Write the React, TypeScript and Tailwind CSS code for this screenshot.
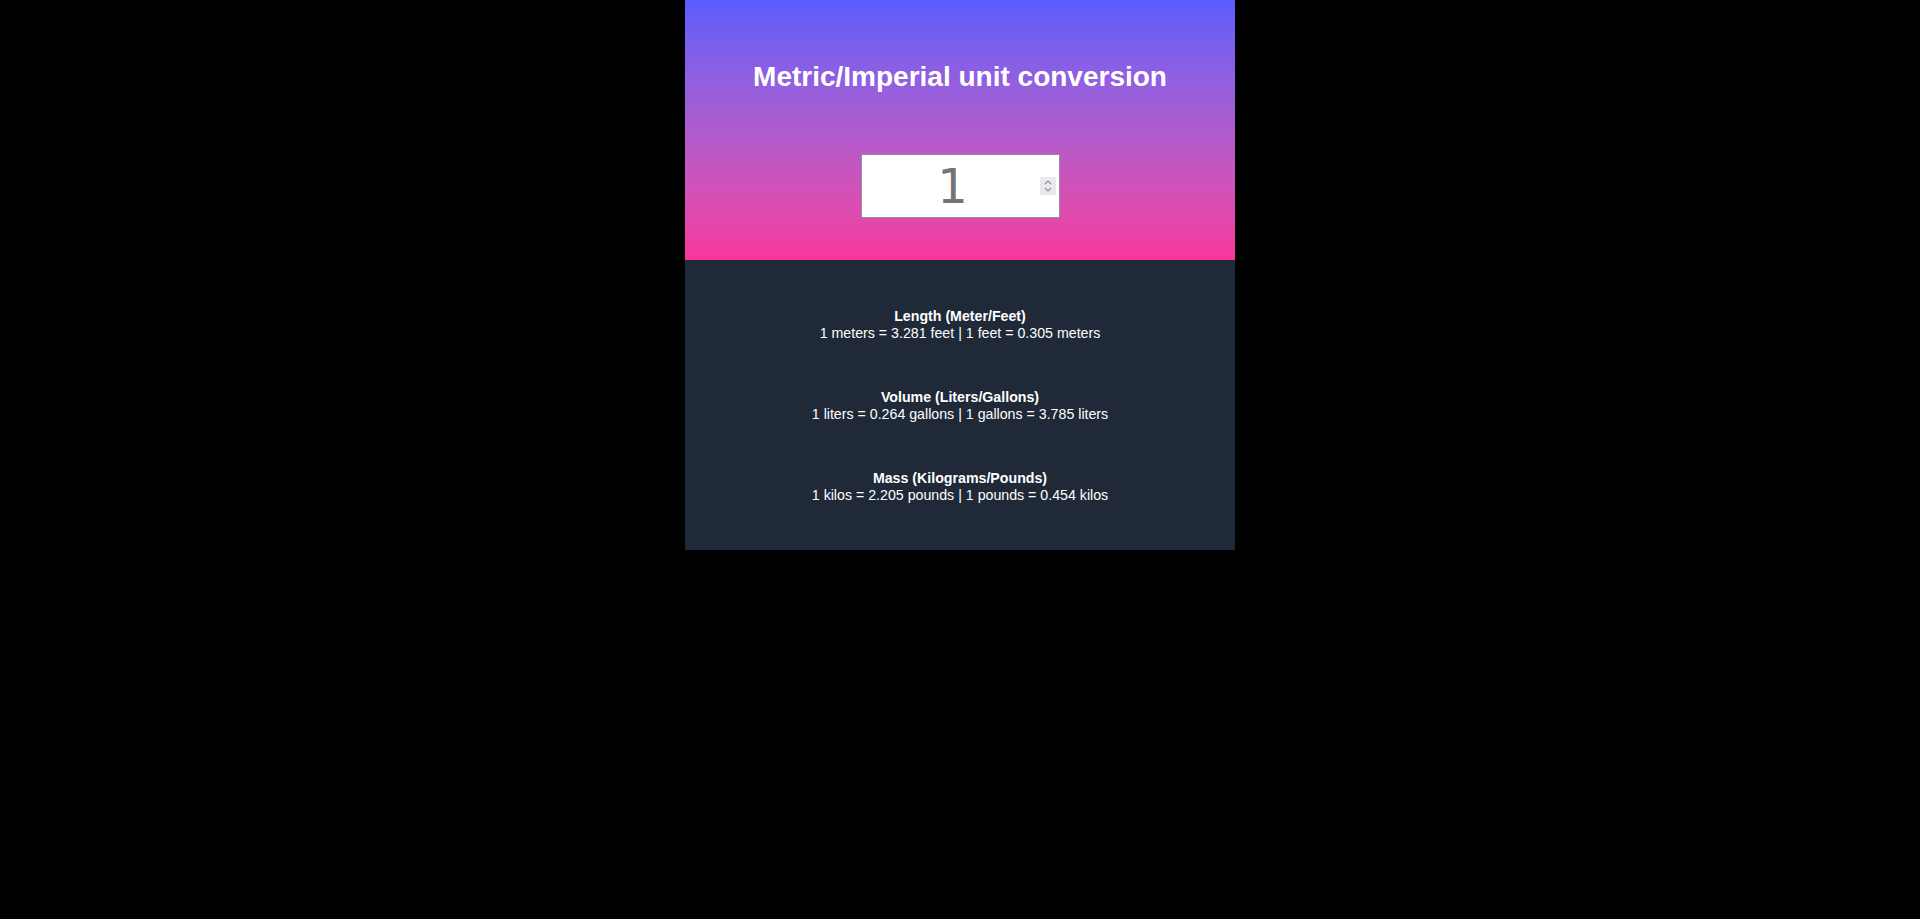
import React, { useState } from 'react';

const rows = [
  { title: 'Length (Meter/Feet)', a: 'meters', b: 'feet', f: 3.281, g: 0.305 },
  { title: 'Volume (Liters/Gallons)', a: 'liters', b: 'gallons', f: 0.264, g: 3.785 },
  { title: 'Mass (Kilograms/Pounds)', a: 'kilos', b: 'pounds', f: 2.205, g: 0.454 },
];

export default function App() {
  const [value, setValue] = useState('1');
  const n = Number(value) || 0;

  return (
    <div className="min-h-[919px] bg-black font-['Liberation_Sans',Arial,sans-serif] text-white">
      <div className="mx-auto w-[550px]">
        {/* header */}
        <div className="flex h-[260px] flex-col items-center bg-gradient-to-b from-[#5b5cfd] to-[#f8369b]">
          <h1 className="mt-[61px] text-[28px] font-bold leading-8">Metric/Imperial unit conversion</h1>
          <div className="mt-[61px] flex h-[64px] w-[199px] items-center border border-[#8f8f9d] bg-white">
            <input
              type="number"
              value={value}
              onChange={(e) => setValue(e.target.value)}
              className="h-full min-w-0 flex-1 bg-transparent pl-1 text-center font-['DejaVu_Sans',sans-serif] text-5xl text-[#757575] outline-none [appearance:textfield] [&::-webkit-inner-spin-button]:appearance-none"
            />
            <div className="mr-[3px] flex h-[18px] w-4 flex-col items-center justify-center gap-[2px] bg-[#e9e9ed]">
              <svg width="8" height="5" viewBox="0 0 8 5" fill="none" stroke="#8a8a94" strokeWidth="1.2">
                <path d="M1 4.2 4 1.2 7 4.2" />
              </svg>
              <svg width="8" height="5" viewBox="0 0 8 5" fill="none" stroke="#8a8a94" strokeWidth="1.2">
                <path d="M1 0.8 4 3.8 7 0.8" />
              </svg>
            </div>
          </div>
        </div>

        {/* results */}
        <div className="flex flex-col gap-[47px] bg-[#1f2937] pb-[46px] pt-[48px] text-center text-[14.2px] leading-[17px]">
          {rows.map((r) => (
            <div key={r.title}>
              <div className="font-bold">{r.title}</div>
              <div>
                {n} {r.a} = {(n * r.f).toFixed(3)} {r.b} | {n} {r.b} = {(n * r.g).toFixed(3)} {r.a}
              </div>
            </div>
          ))}
        </div>
      </div>
    </div>
  );
}
